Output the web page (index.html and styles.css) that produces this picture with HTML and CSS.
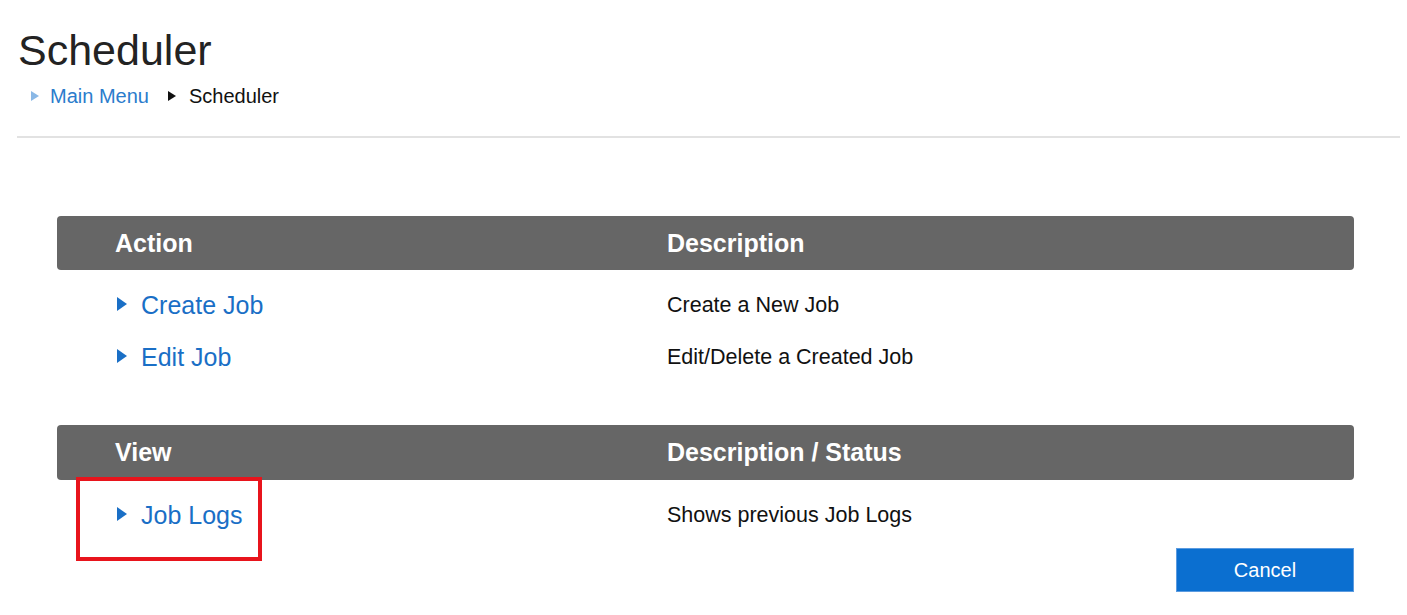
FILE: index.html
```html
<!DOCTYPE html>
<html lang="en">
<head>
<meta charset="utf-8">
<title>Scheduler</title>
<link rel="stylesheet" href="styles.css">
</head>
<body>
<div class="page">
  <h1 class="title">Scheduler</h1>
  <nav class="breadcrumb">
    <svg class="crumb-tri light" viewBox="0 0 8 10" width="8" height="10"><polygon points="0,0 8,5 0,10"/></svg>
    <a class="crumb-link" href="#">Main Menu</a>
    <svg class="crumb-tri dark" viewBox="0 0 8 10" width="8" height="10"><polygon points="0,0 8,5 0,10"/></svg>
    <span class="crumb-current">Scheduler</span>
  </nav>
  <div class="rule"></div>

  <section class="block block-action">
    <div class="head">
      <div class="cell">Action</div>
      <div class="cell">Description</div>
    </div>
    <div class="row">
      <a class="link" href="#"><svg class="tri" viewBox="0 0 10 14" width="10" height="14"><polygon points="0,0 10,7 0,14"/></svg>Create Job</a>
      <div class="desc">Create a New Job</div>
    </div>
    <div class="row">
      <a class="link" href="#"><svg class="tri" viewBox="0 0 10 14" width="10" height="14"><polygon points="0,0 10,7 0,14"/></svg>Edit Job</a>
      <div class="desc">Edit/Delete a Created Job</div>
    </div>
  </section>

  <section class="block block-view">
    <div class="head">
      <div class="cell">View</div>
      <div class="cell">Description / Status</div>
    </div>
    <div class="row">
      <a class="link" href="#"><svg class="tri" viewBox="0 0 10 14" width="10" height="14"><polygon points="0,0 10,7 0,14"/></svg>Job Logs</a>
      <div class="desc">Shows previous Job Logs</div>
    </div>
    <div class="highlight"></div>
  </section>

  <div class="actions">
    <button class="btn-cancel" type="button">Cancel</button>
  </div>
</div>
</body>
</html>
```

FILE: styles.css
```css
html, body {
  margin: 0;
  padding: 0;
  background: #ffffff;
}

body {
  font-family: "Liberation Sans", Arial, sans-serif;
  color: #111111;
}

.page {
  padding: 29px 0 0 17px;
  width: 1383px;
}

.title {
  margin: 0 0 0 1px;
  font-size: 43px;
  line-height: 43px;
  font-weight: normal;
  color: #232323;
}

.breadcrumb {
  margin-top: 14px;
  padding-left: 14px;
  display: flex;
  align-items: center;
  height: 20px;
  font-size: 20px;
  line-height: 20px;
}

.crumb-tri {
  display: block;
  flex: none;
}

.crumb-tri.light {
  fill: #8ab8e6;
  margin-right: 11px;
}

.crumb-tri.dark {
  fill: #111111;
  margin-left: 19px;
  margin-right: 13px;
}

.crumb-link {
  color: #2b7ccc;
  text-decoration: none;
}

.crumb-current {
  color: #111111;
}

.rule {
  margin-top: 30px;
  height: 2px;
  background: #e2e2e2;
}

.block {
  margin-left: 40px;
  width: 1297px;
}

.block-action {
  margin-top: 78px;
}

.block-view {
  margin-top: 42px;
  position: relative;
}

.head {
  display: grid;
  grid-template-columns: 552px 1fr;
  align-items: center;
  height: 54px;
  padding-left: 58px;
  background: #666666;
  border-radius: 4px;
  color: #ffffff;
  font-weight: bold;
  font-size: 25px;
}

.block-view .head {
  height: 55px;
}

.block .head + .row {
  margin-top: 9px;
}

.row {
  display: grid;
  grid-template-columns: 552px 1fr;
  align-items: center;
  height: 52px;
  padding-left: 58px;
}

.link {
  display: flex;
  align-items: center;
  color: #1a6fc6;
  text-decoration: none;
  font-size: 25px;
}

.tri {
  display: block;
  flex: none;
  fill: #1a6fc6;
  margin-left: 2px;
  margin-right: 14px;
  margin-top: -2px;
}

.desc {
  font-size: 21.5px;
  color: #111111;
}

.highlight {
  position: absolute;
  left: 19px;
  top: 52px;
  width: 186px;
  height: 84px;
  box-sizing: border-box;
  border: 4px solid #e8141c;
}

.actions {
  display: flex;
  justify-content: flex-end;
  width: 1337px;
  margin-top: 7px;
}

.btn-cancel {
  width: 178px;
  height: 44px;
  background: #0b6fd0;
  border: 1px solid #5b9be0;
  color: #ffffff;
  font-family: "Liberation Sans", Arial, sans-serif;
  font-size: 20px;
  padding: 0;
  cursor: pointer;
}
```
